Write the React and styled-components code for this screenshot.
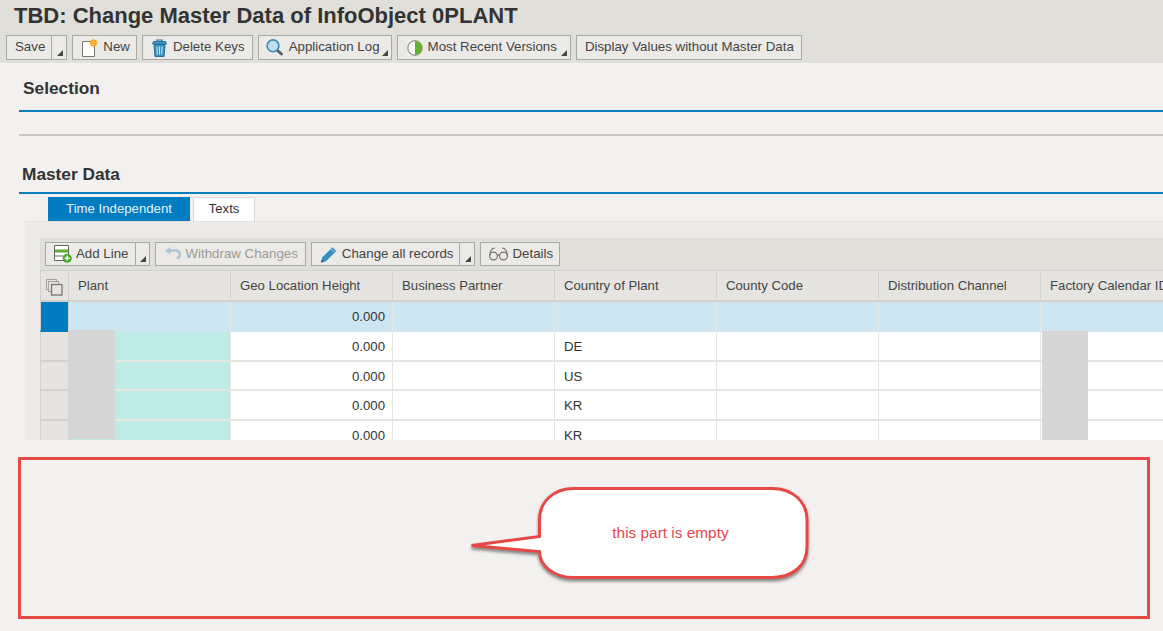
import React from 'react';
import styled, { createGlobalStyle } from 'styled-components';

const GlobalStyle = createGlobalStyle`
  html, body {
    margin: 0;
    padding: 0;
    background: #f2f1ef;
    overflow: hidden;
  }
  body {
    font-family: 'Liberation Sans', Arial, sans-serif;
    color: #333;
  }
`;

const columns = [
  'Geo Location Height',
  'Business Partner',
  'Country of Plant',
  'County Code',
  'Distribution Channel',
  'Factory Calendar ID',
];

const rows = [
  { height: 30, country: '', selected: true },
  { height: 30, country: 'DE' },
  { height: 29, country: 'US' },
  { height: 30, country: 'KR' },
  { height: 30, country: 'KR' },
];

function NewIcon() {
  return (
    <svg width='17' height='19' viewBox='0 0 17 19'>
      <path d='M1.5 3.5h9l3 3v12h-12z' fill='#fff' stroke='#77776f' />
      <circle cx='12.5' cy='5' r='3.4' fill='#f7a21b' />
      <path d='M12.5 0.5v9M8 5h9M9.3 1.8l6.4 6.4M15.7 1.8l-6.4 6.4' stroke='#f9b84a' strokeWidth='0.8' />
    </svg>
  );
}

function TrashIcon() {
  return (
    <svg width='17' height='18' viewBox='0 0 17 18'>
      <path d='M6 2.5V1h5v1.5' stroke='#1f6f9a' strokeWidth='1.2' fill='none' />
      <path d='M1.5 5l1-2.5h12l1 2.5z' fill='#4a9cc5' stroke='#1f6f9a' />
      <path d='M3 5.5h11l-1 12h-9z' fill='#3d93bd' stroke='#1f6f9a' />
      <path d='M6 7.5l.3 8M8.5 7.5v8M11 7.5l-.3 8' stroke='#cfe4ee' strokeWidth='1' />
    </svg>
  );
}

function SearchIcon() {
  return (
    <svg width='18' height='17' viewBox='0 0 18 17'>
      <path d='M11.5 11.5l4 3.5' stroke='#5c5c5c' strokeWidth='2.8' strokeLinecap='round' />
      <circle cx='7' cy='6.8' r='5.9' fill='#bfdff0' stroke='#3a8cb7' strokeWidth='1.6' />
    </svg>
  );
}

function HalfCircleIcon() {
  return (
    <svg width='16' height='16' viewBox='0 0 16 16'>
      <circle cx='8' cy='8' r='7.2' fill='#fff' stroke='#77776f' />
      <path d='M8 0.8a7.2 7.2 0 0 1 0 14.4z' fill='#62b52f' />
    </svg>
  );
}

function AddLineIcon() {
  return (
    <svg width='18' height='18' viewBox='0 0 18 18'>
      <path d='M0.5 0.5h14v15h-14z' fill='#fff' stroke='#66665f' />
      <rect x='1' y='4.5' width='13' height='3' fill='#5fae2f' />
      <path d='M0.5 11h10' stroke='#66665f' />
      <circle cx='13.2' cy='13.2' r='4.5' fill='#4fa72d' />
      <path d='M10.8 13.2h4.8M13.2 10.8v4.8' stroke='#fff' strokeWidth='1.6' />
    </svg>
  );
}

function UndoIcon() {
  return (
    <svg width='18' height='14' viewBox='0 0 18 14'>
      <path d='M5 3.5h6.5a4 4 0 0 1 1.5 7.8' fill='none' stroke='#aec6d3' strokeWidth='2.6' />
      <path d='M6.5 0v7.5L0.5 3.8z' fill='#aec6d3' />
    </svg>
  );
}

function PencilIcon() {
  return (
    <svg width='18' height='17' viewBox='0 0 17 17'>
      <path d='M0.5 16.5l1.2-5L12 1.2 15.8 5 5.5 15.3z' fill='#3790bb' />
      <path d='M10.5 2.8l3.7 3.7' stroke='#d7e9f2' strokeWidth='0.8' />
      <path d='M0.5 16.5l.7-3 2.3 2.3z' fill='#1f5f80' />
    </svg>
  );
}

function GlassesIcon() {
  return (
    <svg width='19' height='14' viewBox='0 0 19 14'>
      <g fill='none' stroke='#77776f' strokeWidth='1.2'>
        <circle cx='4.5' cy='9' r='3.9' />
        <circle cx='14.5' cy='9' r='3.9' />
        <path d='M8.4 8.5c.7-.7 1.5-.7 2.2 0M0.7 8.5C1 4 3 1 6 1M18.3 8.5C18 4 16 1 13 1' />
      </g>
    </svg>
  );
}

function CopyIcon() {
  return (
    <svg width='17' height='17' viewBox='0 0 17 17'>
      <g fill='#e6e4e0'>
        <rect x='0.5' y='0.5' width='10' height='10' stroke='#a3a29c' />
        <rect x='2.5' y='2.5' width='10' height='10' stroke='#a3a29c' />
        <rect x='5.5' y='5.5' width='10.5' height='10.5' stroke='#77776f' strokeWidth='1.3' />
      </g>
    </svg>
  );
}

export default function App() {
  return (
    <Page>
      <GlobalStyle />
      <Header>
        <Title>TBD: Change Master Data of InfoObject 0PLANT</Title>
        <Toolbar>
          <SplitButton>
            <ButtonBody>Save</ButtonBody>
            <Caret $wide />
          </SplitButton>
          <Button $right='6px'>
            <NewIcon />
            New
          </Button>
          <Button $right='7px'>
            <TrashIcon />
            Delete Keys
          </Button>
          <MenuButton>
            <SearchIcon />
            Application Log
          </MenuButton>
          <MenuButton $wide>
            <HalfCircleIcon />
            Most Recent Versions
          </MenuButton>
          <Button $right='7px'>Display Values without Master Data</Button>
        </Toolbar>
      </Header>

      <Section>
        <SectionTitle $height='47px' $line='50px'>Selection</SectionTitle>
        <BlueRule />
        <GrayRule />
      </Section>

      <Section $top='28px'>
        <SectionTitle $indent='3px' $height='28px' $line='20px'>Master Data</SectionTitle>
        <BlueRule />
      </Section>

      <Tabs>
        <Tab $active>Time Independent</Tab>
        <Tab>Texts</Tab>
      </Tabs>

      <Panel>
        <TableToolbar>
          <SplitButton>
            <ButtonBody>
              <AddLineIcon />
              Add Line
            </ButtonBody>
            <Caret />
          </SplitButton>
          <Button $disabled $right='7px'>
            <UndoIcon />
            Withdraw Changes
          </Button>
          <SplitButton>
            <ButtonBody>
              <PencilIcon />
              Change all records
            </ButtonBody>
            <Caret $wide />
          </SplitButton>
          <Button $right='6px'>
            <GlassesIcon />
            Details
          </Button>
        </TableToolbar>

        <Table>
          <HeadRow>
            <RowHandle $head>
              <CopyIcon />
            </RowHandle>
            <HeadCell>Plant</HeadCell>
            {columns.map((name) => (
              <HeadCell key={name}>{name}</HeadCell>
            ))}
          </HeadRow>
          {rows.map((row, i) => (
            <Row key={i} $height={row.height} $selected={row.selected}>
              <RowHandle $selected={row.selected} />
              <PlantCell $selected={row.selected} />
              <NumberCell>0.000</NumberCell>
              <Cell />
              <Cell>{row.country}</Cell>
              <Cell />
              <Cell />
              <Cell />
            </Row>
          ))}
          <Redaction $left='28px' $top='60px' $width='47px' />
          <Redaction $left='1002px' $top='61px' $width='46px' />
        </Table>
      </Panel>

      <CommentBox>
        <Callout>
          <svg width='344' height='100' viewBox='0 0 344 100'>
            <defs>
              <filter id='shadow' x='-5%' y='-5%' width='110%' height='115%'>
                <feDropShadow dx='0' dy='2.5' stdDeviation='1.5' floodColor='#555' floodOpacity='0.7' />
              </filter>
            </defs>
            <path
              d='M106 2.5H304C325 2.5 339 16 339 34V61C339 79 325 91.5 304 91.5H106C85 91.5 71.5 79 71.5 65.5L3.5 59.5L71.5 50.5V34C71.5 16 85 2.5 106 2.5Z'
              fill='#fff'
              stroke='#e64a45'
              strokeWidth='3'
              filter='url(#shadow)'
            />
          </svg>
          <CalloutText>this part is empty</CalloutText>
        </Callout>
      </CommentBox>
    </Page>
  );
}

const Page = styled.div`
  width: 1163px;
  height: 631px;
  overflow: hidden;
  background: #f2f1ef;
`;

const Header = styled.header`
  height: 63px;
  box-sizing: border-box;
  padding: 4px 0 0 6px;
  background: #e0dfda;
`;

const Title = styled.h1`
  margin: 0 0 0 8px;
  font-size: 22px;
  line-height: 24px;
  font-weight: 700;
  color: #333;
`;

const Toolbar = styled.div`
  display: flex;
  gap: 5px;
  margin-top: 7px;
`;

const Button = styled.div`
  display: flex;
  align-items: center;
  gap: 5px;
  height: 25px;
  box-sizing: border-box;
  padding: 0 ${(p) => p.$right || '8px'} 2px 8px;
  border: 1px solid #a8a8a4;
  background: #eceae6;
  font-size: 13.3px;
  white-space: nowrap;
  color: ${(p) => (p.$disabled ? '#9a9a96' : '#444')};

  svg {
    margin-top: 2px;
  }
`;

const Caret = styled.span`
  flex: none;
  width: ${(p) => (p.$wide ? '14px' : '13px')};
  height: 100%;
  position: relative;
  &::after {
    content: '';
    position: absolute;
    right: 3px;
    bottom: 3px;
    border-style: solid;
    border-width: 0 0 6px 6px;
    border-color: transparent transparent #444 transparent;
  }
`;

const MenuButton = styled(Button)`
  position: relative;
  padding: 0 ${(p) => (p.$wide ? '13px' : '11px')} 2px ${(p) => (p.$wide ? '9px' : '7px')};
  &::after {
    content: '';
    position: absolute;
    right: 3px;
    bottom: 3px;
    border-style: solid;
    border-width: 0 0 6px 6px;
    border-color: transparent transparent #444 transparent;
  }
`;

const SplitButton = styled(Button)`
  padding: 0;
  gap: 0;
`;

const ButtonBody = styled.span`
  display: flex;
  align-items: center;
  gap: 5px;
  height: 100%;
  box-sizing: border-box;
  padding: 0 6px 2px 8px;
  border-right: 1px solid #a8a8a4;
`;

const Section = styled.section`
  margin: ${(p) => p.$top || '0'} 0 0 19px;
`;

const SectionTitle = styled.h2`
  margin: 0;
  padding-left: ${(p) => p.$indent || '4px'};
  height: ${(p) => p.$height};
  line-height: ${(p) => p.$line};
  font-size: 17.3px;
  font-weight: 700;
  color: #333;
`;

const BlueRule = styled.div`
  height: 2px;
  background: #0a7fbf;
`;

const GrayRule = styled.div`
  height: 2px;
  margin-top: 22px;
  background: #c9c8c4;
`;

const Tabs = styled.div`
  display: flex;
  gap: 3px;
  margin: 3px 0 0 48px;
`;

const Tab = styled.div`
  height: 24px;
  box-sizing: border-box;
  line-height: 22px;
  width: ${(p) => (p.$active ? '142px' : '62px')};
  text-align: center;
  font-size: 13.2px;
  color: ${(p) => (p.$active ? '#e6f2f8' : '#333')};
  background: ${(p) => (p.$active ? '#007cc0' : '#fff')};
  border: 1px solid ${(p) => (p.$active ? '#007cc0' : '#d9d8d4')};
  border-bottom: none;
`;

const Panel = styled.div`
  height: 219px;
  box-sizing: border-box;
  margin-left: 25px;
  padding: 16px 0 0 15px;
  background: #ecebe8;
  border-top: 1px solid #e2e1dd;
  overflow: hidden;
`;

const TableToolbar = styled.div`
  display: flex;
  align-items: flex-start;
  gap: 5px;
  height: 32px;
  box-sizing: border-box;
  padding: 4px 0 0 5px;
  background: #e0dfda;

  ${Button} {
    height: 24px;
    gap: 4px;
  }
  ${SplitButton} {
    gap: 0;
  }
  ${ButtonBody} {
    gap: 4px;
  }
`;

const Table = styled.div`
  position: relative;
  width: 1123px;
`;

const HeadRow = styled.div`
  display: grid;
  grid-template-columns: 29px repeat(7, 162px);
  height: 32px;
  background: #e6e4e0;
  border-top: 1px solid #d2d1cc;
  border-bottom: 2px solid #d2d1cc;
  box-sizing: border-box;
`;

const HeadCell = styled.div`
  padding-left: 9px;
  line-height: 30px;
  font-size: 13.2px;
  color: #444;
  white-space: nowrap;
  overflow: hidden;
  border-right: 1px solid #d2d1cc;
`;

const RowHandle = styled.div`
  display: flex;
  align-items: center;
  justify-content: center;
  box-sizing: border-box;
  padding-top: ${(p) => (p.$head ? '4px' : '0')};
  background: ${(p) => (p.$selected ? '#007cc0' : '#e6e4e0')};
  border-right: 1px solid #d2d1cc;
  border-left: 1px solid #d2d1cc;
`;

const Row = styled.div`
  display: grid;
  grid-template-columns: 29px repeat(7, 162px);
  grid-template-rows: ${(p) => p.$height}px;
  background: ${(p) => (p.$selected ? '#cde6f2' : '#fff')};

  > div {
    box-sizing: border-box;
    border-bottom: 2px solid ${(p) => (p.$selected ? '#cde6f2' : '#e6e5e1')};
  }
  > ${RowHandle} {
    border-bottom-color: ${(p) => (p.$selected ? '#007cc0' : '#d2d1cc')};
  }
`;

const Cell = styled.div`
  padding: 0 0 0 9px;
  line-height: 29px;
  font-size: 13.2px;
  color: #333;
  border-right: 1px solid #e6e5e1;
`;

const NumberCell = styled(Cell)`
  padding: 0 7px 0 0;
  text-align: right;
`;

const PlantCell = styled(Cell)`
  background: ${(p) => (p.$selected ? 'transparent' : '#bfeae5')};
`;

const Redaction = styled.div`
  position: absolute;
  top: ${(p) => p.$top};
  left: ${(p) => p.$left};
  width: ${(p) => p.$width};
  height: 109px;
  background: #d5d5d5;
`;

const CommentBox = styled.div`
  position: relative;
  width: 1132px;
  height: 162px;
  box-sizing: border-box;
  margin: 17px 0 0 18px;
  border: 3px solid #e64a45;
`;

const Callout = styled.div`
  position: absolute;
  left: 447px;
  top: 26px;
  width: 344px;
  height: 100px;
`;

const CalloutText = styled.div`
  position: absolute;
  left: 70px;
  top: 2px;
  width: 265px;
  height: 90px;
  display: flex;
  align-items: center;
  justify-content: center;
  font-size: 15.4px;
  color: #e8474f;
`;
